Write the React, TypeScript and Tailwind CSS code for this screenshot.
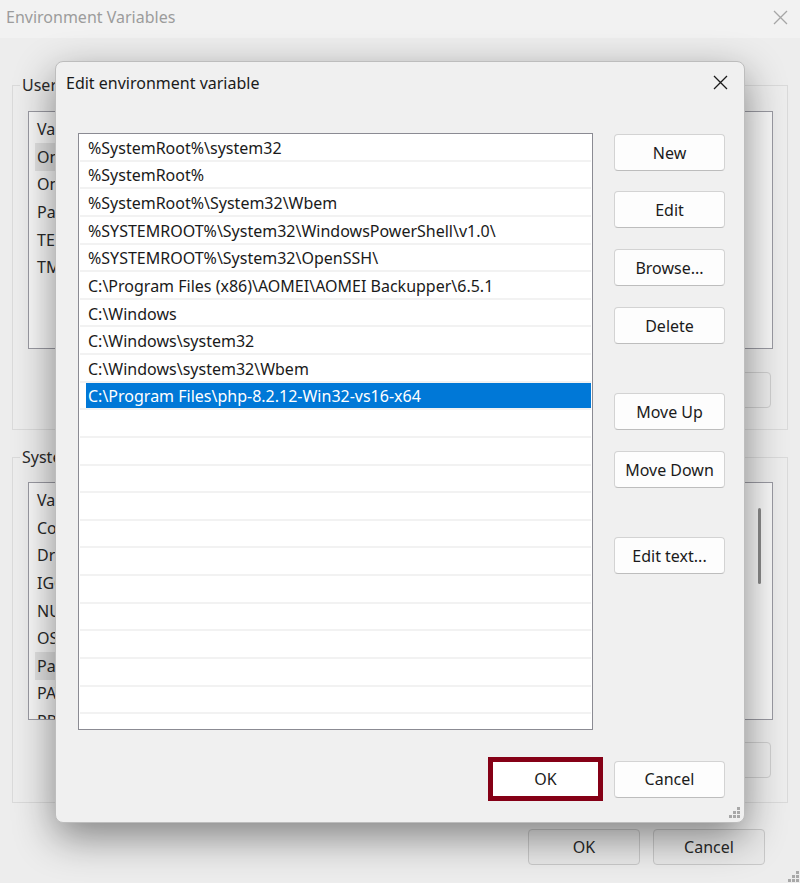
import React from 'react';

const font = { fontFamily: '"Noto Sans", "Open Sans", sans-serif' };

const pathEntries = [
  '%SystemRoot%\\system32',
  '%SystemRoot%',
  '%SystemRoot%\\System32\\Wbem',
  '%SYSTEMROOT%\\System32\\WindowsPowerShell\\v1.0\\',
  '%SYSTEMROOT%\\System32\\OpenSSH\\',
  'C:\\Program Files (x86)\\AOMEI\\AOMEI Backupper\\6.5.1',
  'C:\\Windows',
  'C:\\Windows\\system32',
  'C:\\Windows\\system32\\Wbem',
  'C:\\Program Files\\php-8.2.12-Win32-vs16-x64',
];

const userVars = ['OneDrive', 'OneDriveConsumer', 'Path', 'TEMP', 'TMP'];
const systemVars = [
  'ComSpec',
  'DriverData',
  'IGCCSVC_DB',
  'NUMBER_OF_PROCESSORS',
  'OS',
  'Path',
  'PATHEXT',
  'PROCESSOR_ARCHITECTURE',
  'PROCESSOR_IDENTIFIER',
];

const CloseIcon = ({ color }: { color: string }) => (
  <svg width="15" height="15" viewBox="0 0 15 15">
    <path d="M1 1 L14 14 M14 1 L1 14" stroke={color} strokeWidth="1.3" fill="none" />
  </svg>
);

const Grip = () => (
  <svg width="12" height="12" viewBox="0 0 12 12">
    {[
      [8, 0],
      [4, 4],
      [8, 4],
      [0, 8],
      [4, 8],
      [8, 8],
    ].map(([x, y], i) => (
      <rect key={i} x={x} y={y} width="3" height="3" fill="#a8a8a8" />
    ))}
  </svg>
);

// dialog button, Win11 style
const WinButton = ({ label, className = '' }: { label: string; className?: string }) => (
  <button
    className={`w-[111px] h-[37px] rounded-[4px] bg-[#fdfdfd] border border-[#d3d3d3] border-b-[#bdbdbd] text-[16px] text-[#1b1b1b] flex items-center justify-center ${className}`}
  >
    {label}
  </button>
);

// background list (dimmed window behind the dialog)
const BackList = ({ rows, selected }: { rows: string[]; selected: number }) => (
  <div className="mx-[15px] mr-[14px] h-[238px] border border-[#9a9aa2] bg-[#f8f8f8] overflow-hidden pt-[2px]">
    <div className="h-[29px] flex items-center pl-[8px] text-[16px] text-[#2a2a2a]">Variable</div>
    {rows.map((r, i) => (
      <div key={r} className="h-[27.6px] flex items-stretch">
        <div
          className={`ml-[6px] pl-[2px] w-[600px] flex items-center text-[16px] text-[#2a2a2a] ${
            i === selected ? 'bg-[#e2e2e2]' : ''
          }`}
        >
          {r}
        </div>
      </div>
    ))}
  </div>
);

const BackButtons = () => (
  <div className="flex justify-end gap-[12px] mr-[16px]">
    {['New...', 'Edit...', 'Delete'].map((b) => (
      <button
        key={b}
        className="w-[111px] h-[36px] rounded-[4px] bg-[#ececec] border border-[#cfcfcf] text-[16px] text-[#333]"
      >
        {b}
      </button>
    ))}
  </div>
);

export default function App() {
  return (
    <div className="relative w-[800px] h-[883px] overflow-hidden bg-[#ededed]" style={font}>
      {/* Background window: Environment Variables */}
      <div className="flex flex-col h-full">
        <div className="h-[38px] bg-[#f2f2f2] flex items-start justify-between pt-[7px] pl-[6px] pr-[12px]">
          <span className="text-[16px] leading-[20px] text-[#9c9c9c]">Environment Variables</span>
          <span className="pt-[3px]">
            <CloseIcon color="#a6a6a6" />
          </span>
        </div>

        <fieldset className="mx-[12px] mt-[37px] border border-[#dadada] pt-[16px] pb-[21px]">
          <legend className="ml-[7px] px-[2px] text-[16px] leading-[20px] text-[#2a2a2a]">
            User variables for user
          </legend>
          <BackList rows={userVars} selected={0} />
          <div className="mt-[23px]">
            <BackButtons />
          </div>
        </fieldset>

        <fieldset className="mx-[12px] mt-[17px] border border-[#dadada] pt-[15px] pb-[24px]">
          <legend className="ml-[7px] px-[2px] text-[16px] leading-[20px] text-[#2a2a2a]">
            System variables
          </legend>
          <div className="relative">
            <BackList rows={systemVars} selected={5} />
            <div className="absolute left-[745px] top-[26px] w-[3px] h-[76px] rounded-full bg-[#8a8a8a]" />
          </div>
          <div className="mt-[22px]">
            <BackButtons />
          </div>
        </fieldset>

        <div className="flex justify-end gap-[13px] pr-[35px] mt-[26px]">
          {['OK', 'Cancel'].map((b) => (
            <button
              key={b}
              className="w-[112px] h-[36px] rounded-[4px] bg-[#e9e9e9] border border-[#c9c9c9] text-[16px] text-[#2a2a2a]"
            >
              {b}
            </button>
          ))}
        </div>
        <div className="absolute right-0 bottom-0">
          <Grip />
        </div>
      </div>

      {/* Modal: Edit environment variable */}
      <div className="absolute left-[55px] top-[61px] w-[690px] h-[762px] rounded-[8px] bg-[#f0f0f0] border border-[#bdbdbd] shadow-[0_14px_40px_rgba(0,0,0,0.45)] flex flex-col">
        <div className="h-[41px] flex items-center justify-between pl-[10px] pr-[16px]">
          <span className="text-[16px] text-[#1a1a1a]">Edit environment variable</span>
          <CloseIcon color="#1a1a1a" />
        </div>

        <div className="flex pt-[30px] pl-[22px] pr-[19px] gap-[21px]">
          <div className="w-[515px] h-[597px] border border-[#8b8b93] bg-white overflow-hidden">
            {Array.from({ length: 22 }).map((_, i) => {
              const text = pathEntries[i];
              const sel = i === 9;
              return (
                <div key={i} className="h-[27.63px] mx-[1px] border-b-2 border-[#f2f2f2] flex items-stretch">
                  {text && (
                    <div
                      className={`ml-[6px] pl-[2px] pt-[2px] flex-1 flex items-center text-[16px] whitespace-nowrap ${
                        sel ? 'bg-[#0078d7] text-white' : 'text-[#1a1a1a]'
                      }`}
                    >
                      {text}
                    </div>
                  )}
                </div>
              );
            })}
          </div>

          <div className="flex flex-col pt-[1px]">
            <WinButton label="New" />
            <WinButton label="Edit" className="mt-[20px]" />
            <WinButton label="Browse..." className="mt-[21px]" />
            <WinButton label="Delete" className="mt-[21px]" />
            <WinButton label="Move Up" className="mt-[49px]" />
            <WinButton label="Move Down" className="mt-[21px]" />
            <WinButton label="Edit text..." className="mt-[49px]" />
          </div>
        </div>

        <div className="flex justify-end items-center gap-[11px] pr-[19px] mt-[27px]">
          <button className="w-[115px] h-[44px] border-[5px] border-[#850016] bg-white text-[16px] text-[#1b1b1b]">
            OK
          </button>
          <WinButton label="Cancel" className="h-[36px]" />
        </div>

        <div className="absolute right-[3px] bottom-[3px]">
          <Grip />
        </div>
      </div>
    </div>
  );
}
